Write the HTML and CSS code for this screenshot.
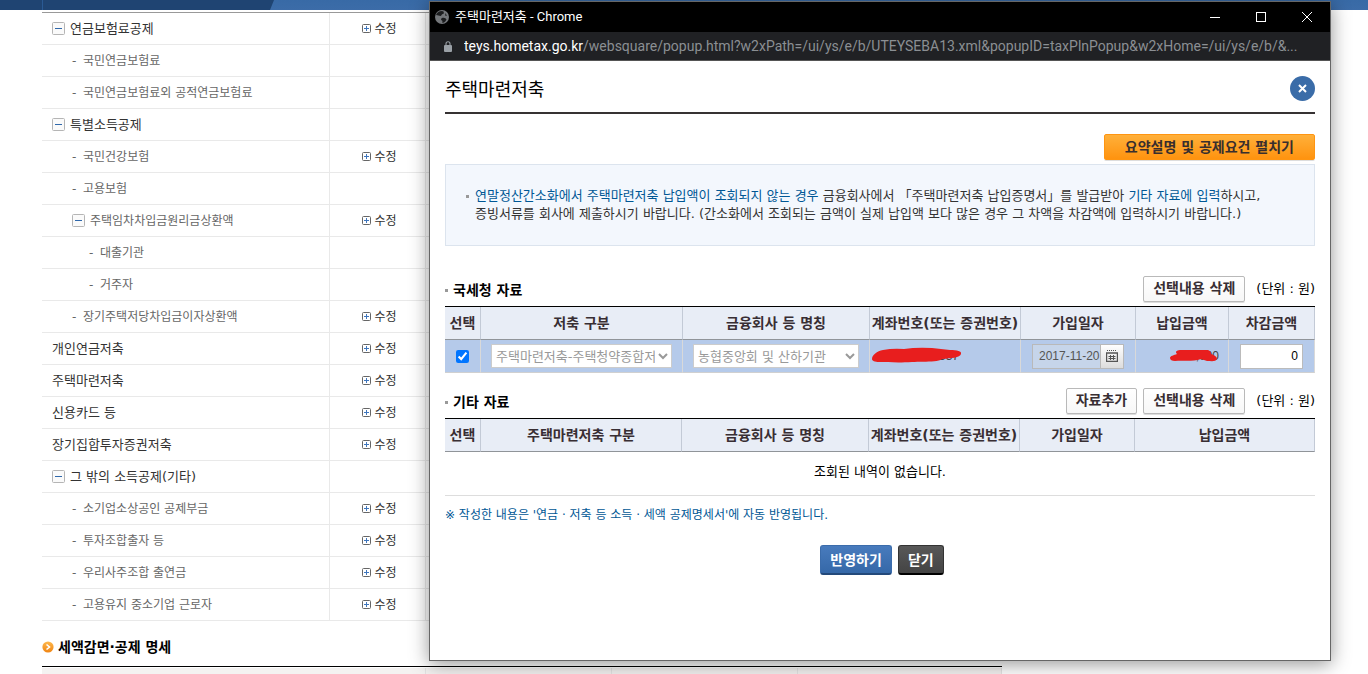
FILE: index.html
```html
<!DOCTYPE html>
<html lang="ko">
<head>
<meta charset="utf-8">
<title>주택마련저축</title>
<link rel="stylesheet" href="styles.css">
</head>
<body>
<svg class="defs" aria-hidden="true">
  <symbol id="plus" viewBox="0 0 9 9"><rect x=".5" y=".5" width="8" height="8" rx="1" fill="#fff" stroke="#666"/><path d="M2 4.5h5M4.5 2v5" stroke="#3f76bd"/></symbol>
  <symbol id="minus" viewBox="0 0 13 13"><rect x=".5" y=".5" width="12" height="12" rx="1" fill="#fafafa" stroke="#b5b5b5"/><path d="M3 6.5h7" stroke="#2f68ab"/></symbol>
</svg>
<div class="topbar">
  <svg class="topbar-tab" viewBox="0 0 275 10" aria-hidden="true"><path d="M0 0h274l-4 10H0z" fill="#1f4472"/><path d="M42.500 0v10" stroke="#2a5a94"/></svg>
</div>
<main class="page">
  <table class="items">
    <colgroup><col class="c-name"><col class="c-edit"><col></colgroup>
    <tbody>
      <tr><td><div class="item"><button class="fold" aria-label="접기"><svg><use href="#minus"/></svg></button>연금보험료공제</div></td><td><button class="edit"><svg><use href="#plus"/></svg>수정</button></td><td></td></tr>
      <tr><td><div class="item sub"><span class="dash">-</span>국민연금보험료</div></td><td></td><td></td></tr>
      <tr><td><div class="item sub"><span class="dash">-</span>국민연금보험료외 공적연금보험료</div></td><td></td><td></td></tr>
      <tr><td><div class="item"><button class="fold" aria-label="접기"><svg><use href="#minus"/></svg></button>특별소득공제</div></td><td></td><td></td></tr>
      <tr><td><div class="item sub"><span class="dash">-</span>국민건강보험</div></td><td><button class="edit"><svg><use href="#plus"/></svg>수정</button></td><td></td></tr>
      <tr><td><div class="item sub"><span class="dash">-</span>고용보험</div></td><td></td><td></td></tr>
      <tr><td><div class="item sub"><button class="fold" aria-label="접기"><svg><use href="#minus"/></svg></button>주택임차차입금원리금상환액</div></td><td><button class="edit"><svg><use href="#plus"/></svg>수정</button></td><td></td></tr>
      <tr><td><div class="item sub deep"><span class="dash">-</span>대출기관</div></td><td></td><td></td></tr>
      <tr><td><div class="item sub deep"><span class="dash">-</span>거주자</div></td><td></td><td></td></tr>
      <tr><td><div class="item sub"><span class="dash">-</span>장기주택저당차입금이자상환액</div></td><td><button class="edit"><svg><use href="#plus"/></svg>수정</button></td><td></td></tr>
      <tr><td><div class="item">개인연금저축</div></td><td><button class="edit"><svg><use href="#plus"/></svg>수정</button></td><td></td></tr>
      <tr><td><div class="item">주택마련저축</div></td><td><button class="edit"><svg><use href="#plus"/></svg>수정</button></td><td></td></tr>
      <tr><td><div class="item">신용카드 등</div></td><td><button class="edit"><svg><use href="#plus"/></svg>수정</button></td><td></td></tr>
      <tr><td><div class="item">장기집합투자증권저축</div></td><td><button class="edit"><svg><use href="#plus"/></svg>수정</button></td><td></td></tr>
      <tr><td><div class="item"><button class="fold" aria-label="접기"><svg><use href="#minus"/></svg></button>그 밖의 소득공제(기타)</div></td><td></td><td></td></tr>
      <tr><td><div class="item sub"><span class="dash">-</span>소기업소상공인 공제부금</div></td><td><button class="edit"><svg><use href="#plus"/></svg>수정</button></td><td></td></tr>
      <tr><td><div class="item sub"><span class="dash">-</span>투자조합출자 등</div></td><td><button class="edit"><svg><use href="#plus"/></svg>수정</button></td><td></td></tr>
      <tr><td><div class="item sub"><span class="dash">-</span>우리사주조합 출연금</div></td><td><button class="edit"><svg><use href="#plus"/></svg>수정</button></td><td></td></tr>
      <tr><td><div class="item sub"><span class="dash">-</span>고용유지 중소기업 근로자</div></td><td><button class="edit"><svg><use href="#plus"/></svg>수정</button></td><td></td></tr>
    </tbody>
  </table>
  <h2 class="next-title">
    <svg viewBox="0 0 12 12" aria-hidden="true"><defs><linearGradient id="og" x2="0" y2="1"><stop stop-color="#ffb94d"/><stop offset="1" stop-color="#ef8413"/></linearGradient></defs><circle cx="6" cy="6" r="5.600" fill="url(#og)"/><path d="M4.500 3.500 7.500 6l-3 2.500" fill="none" stroke="#fff" stroke-width="1.600"/></svg>
    세액감면·공제 명세
  </h2>
  <div class="next-head"><span></span><span></span><span></span><span></span></div>
</main>

<section class="window" aria-label="주택마련저축">
  <header class="titlebar">
    <svg class="globe" viewBox="0 0 14 14" aria-hidden="true"><circle cx="7" cy="7" r="7" fill="#74777b"/><path d="M1 5c2 0 3 1 4.500 1 1 0 1-2 2.500-2 1 0 1-1.500.5-2.500L7 1C4 1 2 2.500 1 5zM7 8c2-1 4 .2 4.500 1.500C11 11 9.500 12.500 7.500 13c-.5-1 .5-2-.5-2.500C5.500 10 6 8.500 7 8zM10 3l2 2.500-1.500.5z" fill="#1c1d1f"/></svg>
    <span class="win-title">주택마련저축 - Chrome</span>
    <button aria-label="최소화"><svg viewBox="0 0 12 12"><path d="M1 6.500h10"/></svg></button>
    <button aria-label="최대화"><svg viewBox="0 0 12 12"><rect x="1.500" y="1.500" width="9" height="9"/></svg></button>
    <button aria-label="창 닫기"><svg viewBox="0 0 12 12"><path d="m1 1 10 10M11 1 1 11"/></svg></button>
  </header>
  <div class="address">
    <svg viewBox="0 0 8 11" aria-hidden="true"><rect y="4" width="8" height="7" rx="1" fill="#9aa0a6"/><path d="M2 4.500V2.700a2 2 0 0 1 4 0v1.800" fill="none" stroke="#9aa0a6" stroke-width="1.100"/></svg>
    <div class="url"><b>teys.hometax.go.kr</b>/websquare/popup.html?w2xPath=/ui/ys/e/b/UTEYSEBA13.xml&amp;popupID=taxPlnPopup&amp;w2xHome=/ui/ys/e/b/&amp;...</div>
  </div>
  <div class="content">
    <div class="heading">
      <h1>주택마련저축</h1>
      <button class="close" aria-label="닫기"><svg viewBox="0 0 9 9"><path d="m1 1 7 7M8 1 1 8"/></svg></button>
    </div>
    <button class="expand">요약설명 및 공제요건 펼치기</button>
    <div class="notice">
      <p><em>연말정산간소화에서 주택마련저축 납입액이 조회되지 않는 경우</em> 금융회사에서 「주택마련저축 납입증명서」를 발급받아 <em>기타 자료에 입력</em>하시고,<br>증빙서류를 회사에 제출하시기 바랍니다. (간소화에서 조회되는 금액이 실제 납입액 보다 많은 경우 그 차액을 차감액에 입력하시기 바랍니다.)</p>
    </div>

    <div class="section">
      <h3>국세청 자료</h3>
      <button class="btn">선택내용 삭제</button>
      <span class="unit">(단위 : 원)</span>
    </div>
    <table class="grid">
      <colgroup><col class="g-check"><col class="g-kind"><col class="g-bank"><col class="g-acct"><col class="g-date"><col class="g-paid"><col></colgroup>
      <thead><tr><th>선택</th><th>저축 구분</th><th>금융회사 등 명칭</th><th>계좌번호(또는 증권번호)</th><th>가입일자</th><th>납입금액</th><th>차감금액</th></tr></thead>
      <tbody><tr class="selected">
        <td><input class="check" type="checkbox" checked aria-label="선택"></td>
        <td><select class="kind" disabled aria-label="저축 구분"><option>주택마련저축-주택청약종합저축</option></select></td>
        <td><select class="bank" disabled aria-label="금융회사 등 명칭"><option>농협중앙회 및 산하기관</option></select></td>
        <td><div class="masked acct"><span>337</span><svg viewBox="0 0 90 16" aria-hidden="true"><path d="M0 12C0 8 5 4 11 3q10-2 21-1Q45 0 60 1l18 2c7 0 12 1 11 4-1 4-10 4-19 5-5 4-20 2-30 3-15 1-25 0-33 0-4 0-7-1-7-3z"/></svg></div></td>
        <td><div class="date"><input type="text" value="2017-11-20" disabled aria-label="가입일자"><button aria-label="달력"><svg viewBox="0 0 12 12"><path d="M1 .5h10" stroke-dasharray="1 1"/><path d="M.5 3v8.500h11V3M0 3h12" stroke-width="1.400"/><path d="M2.500 6.500h7M2.500 8.500h7M4.500 5v5M7.500 5v5"/></svg></button></div></td>
        <td><div class="masked paid"><span>,000</span><svg viewBox="0 0 47 12" aria-hidden="true"><path d="M0 8c0-2 4-3 7-4-3-3 1-4 4-4h27c3 1 3 3 3 4 4 1 6 3 6 5-1 3-6 2-10 2L31 9c-9 3-18 1-26 2-3 0-5-1-5-3z"/></svg></div></td>
        <td><input class="minus-amount" type="text" value="0" aria-label="차감금액"></td>
      </tr></tbody>
    </table>

    <div class="section">
      <h3>기타 자료</h3>
      <button class="btn">자료추가</button>
      <button class="btn">선택내용 삭제</button>
      <span class="unit">(단위 : 원)</span>
    </div>
    <table class="grid">
      <colgroup><col class="g-check"><col class="g-kind-wide"><col class="g-bank"><col class="g-acct"><col class="g-date"><col></colgroup>
      <thead><tr><th>선택</th><th>주택마련저축 구분</th><th>금융회사 등 명칭</th><th>계좌번호(또는 증권번호)</th><th>가입일자</th><th>납입금액</th></tr></thead>
      <tbody><tr class="empty"><td colspan="6">조회된 내역이 없습니다.</td></tr></tbody>
    </table>
    <p class="foot">※ 작성한 내용은 '연금 · 저축 등 소득 · 세액 공제명세서'에 자동 반영됩니다.</p>
    <div class="actions"><button class="apply">반영하기</button><button class="cancel">닫기</button></div>
  </div>
</section>
</body>
</html>
```
FILE: styles.css
```css
* { box-sizing: border-box; }
html { overflow: hidden; }
body {
  margin: 0;
  background: #fff;
  color: #333;
  font: 13px/18px "DejaVu Sans", "Noto Sans CJK KR", sans-serif;
}
button, input, select { font: inherit; color: inherit; margin: 0; }
button { padding: 0; border: 0; background: none; }
h1, h2, h3, p { margin: 0; }
table { border-collapse: separate; border-spacing: 0; table-layout: fixed; }
th, td { padding: 0; }
.defs { position: absolute; width: 0; height: 0; }

.topbar { height: 10px; background: linear-gradient(#386aa6, #3c6ca8); }
.topbar-tab { display: block; width: 275px; height: 10px; }

.page { width: 960px; margin: 2px 0 0 42px; }
.items { width: 100%; border-top: 1px solid #999; }
.c-name { width: 288px; }
.c-edit { width: 96px; }
.items td { height: 32px; border-bottom: 1px solid #e9e9e9; border-right: 1px solid #e9e9e9; }
.items td:last-child { border-right: 0; }
.item { display: flex; align-items: center; gap: 5px; padding-left: 10px; }
.sub { padding-left: 30px; color: #666; font-size: 12px; }
.deep { padding-left: 47px; }
.dash { width: 6px; }
.fold, .fold svg { display: block; width: 13px; height: 13px; }
.edit { display: flex; align-items: center; gap: 3px; margin: 0 auto; padding-left: 4px; font-size: 12px; }
.edit svg { width: 9px; height: 9px; }
.next-title {
  display: flex; align-items: center; gap: 4px; height: 46px; padding-top: 7px;
  border-bottom: 1px solid #000; color: #000; font-size: 14px; font-weight: bold;
}
.next-title svg { width: 12px; height: 12px; }
.next-head { display: grid; grid-template-columns: 384px 186px 186px 1fr; height: 32px; margin-top: 1px; background: #f4f2f1; }
.next-head span { border-right: 1px solid #e4e4e4; }

.window {
  position: absolute; top: 1px; left: 429px; right: 37px;
  border: 1px solid #666; background: #fff;
  box-shadow: 0 3px 18px rgba(0, 0, 0, .42);
}
.titlebar { display: flex; align-items: center; height: 30px; padding-left: 5px; background: #000; color: #fff; }
.globe { width: 14px; height: 14px; }
.win-title { flex: 1; padding-left: 6px; font: 13px/18px "Roboto", "Noto Sans CJK KR", sans-serif; }
.titlebar button { width: 46px; height: 30px; }
.titlebar button svg { display: block; width: 12px; height: 12px; margin: 0 auto; fill: none; stroke: #fff; }
.address { display: flex; align-items: center; gap: 12px; height: 29px; padding: 0 20px 0 14px; border-bottom: 1px solid #555; background: #202124; color: #8b8f93; }
.address svg { flex: none; width: 8px; height: 11px; }
.url { overflow: hidden; white-space: nowrap; font: 14px/20px "Roboto", sans-serif; }
.url b { color: #fff; font-weight: normal; }

.content { display: flex; flex-direction: column; padding: 0 15px 85px; }
.heading { display: flex; align-items: center; justify-content: space-between; height: 53px; padding-top: 3px; border-bottom: 2px solid #363233; }
h1 { padding-top: 3px; color: #000; font-size: 18px; line-height: 26px; font-weight: normal; }
.close { width: 25px; height: 25px; border-radius: 50%; background: #3a6ca8; }
.close svg { display: block; width: 9px; height: 9px; margin: 0 auto; stroke: #fff; stroke-width: 2; }
.expand {
  align-self: flex-end; height: 26px; margin-top: 20px; padding: 0 20px;
  border: 1px solid #ff9511; border-radius: 2px; background: linear-gradient(#ffb03a, #ff930f);
  box-shadow: 0 1px 0 #ddd; color: #382e2e; font-size: 14px; font-weight: bold;
}
.notice { height: 82px; margin-top: 4px; padding: 22px 20px; border: 1px solid #dce4ee; background: #f3f7fd; }
.notice p { display: flow-root; padding-left: 9px; white-space: nowrap; background: linear-gradient(#999, #999) 0 8px / 3px 3px no-repeat; }
.notice em { color: #005795; font-style: normal; }

.section { display: flex; align-items: center; gap: 6px; height: 26px; margin-top: 30px; color: #000; }
.grid + .section { margin-top: 15px; }
h3 { flex: 1; padding: 2px 0 0 8px; font-size: 14px; line-height: 20px; background: linear-gradient(#999, #999) 0 11px / 3px 3px no-repeat; }
.btn { height: 26px; padding: 0 9px 2px; border: 1px solid #b9b9b9; border-radius: 2px; background: linear-gradient(#fff, #f7f7f7); box-shadow: 0 1px 0 #ddd; color: #382e33; font-size: 14px; font-weight: bold; }
.unit { padding-left: 5px; }

.grid { width: 100%; margin-top: 4px; border-top: 1px solid #000; }
.g-check { width: 36px; }
.g-kind { width: 202px; }
.g-kind-wide { width: 201px; }
.g-bank { width: 187px; }
.g-acct { width: 151px; }
.g-date { width: 115px; }
.g-paid { width: 93px; }
.grid th { height: 33px; border-right: 1px solid #c3cad6; border-bottom: 1px solid #909499; background: #e8edf6; color: #382e33; font-size: 14px; white-space: nowrap; }
.selected td { height: 33px; border-right: 1px solid #d9d9d9; border-bottom: 1px solid #d0d0d0; background: #b5caea; }
.selected td > * { display: block; margin: 0 auto; }
.selected .check { width: 13px; height: 13px; accent-color: #0075ff; }
select { height: 24px; border: 1px solid #ccc; border-radius: 0; background: #fff; color: #999; opacity: 1; }
select:disabled { opacity: 1; color: #999; }
.kind { width: 181px; }
.bank { width: 166px; }
.selected td .masked { position: relative; height: 18px; font: 12px/18px "Liberation Sans", sans-serif; color: #444; text-align: right; }
.masked svg { position: absolute; fill: #e81e1e; }
.acct { padding-right: 61px; }
.acct svg { left: 2px; top: 0; width: 90px; height: 16px; }
.paid { padding-right: 9px; }
.paid svg { right: 11px; top: 3px; width: 47px; height: 12px; }
.selected td .date { display: flex; width: 92px; height: 25px; border: 1px solid #b9b9b9; }
.date input { width: 67px; padding: 0 0 0 6px; border: 0; background: #c6d5ea; color: #555; font: 12px/18px "Liberation Sans", sans-serif; }
.date button { flex: 1; border-left: 1px solid #b9b9b9; background: linear-gradient(#fff, #dcdcdc); }
.date svg { display: block; width: 12px; height: 12px; margin: 0 auto; fill: none; stroke: #555; }
.minus-amount { width: 63px; height: 25px; padding: 0 4px; border: 1px solid #bbb; background: #fff; color: #000; font: 12px/18px "Liberation Sans", sans-serif; text-align: right; }
.empty td { height: 44px; padding-bottom: 4px; border-bottom: 1px solid #ddd; color: #000; text-align: center; }
.foot { margin-top: 10px; color: #005795; font-size: 12px; }
.actions { display: flex; justify-content: center; gap: 6px; margin-top: 21px; padding-left: 4px; }
.actions button { height: 30px; padding: 0 9px; border-radius: 3px; color: #fff; font-size: 14px; font-weight: bold; }
.apply { border: 1px solid #3b6cab; border-bottom: 2px solid #23497a; background: linear-gradient(#487bbd, #3568a8); }
.cancel { border: 1px solid #333; border-bottom: 2px solid #000; background: linear-gradient(#585858, #444); }
```
